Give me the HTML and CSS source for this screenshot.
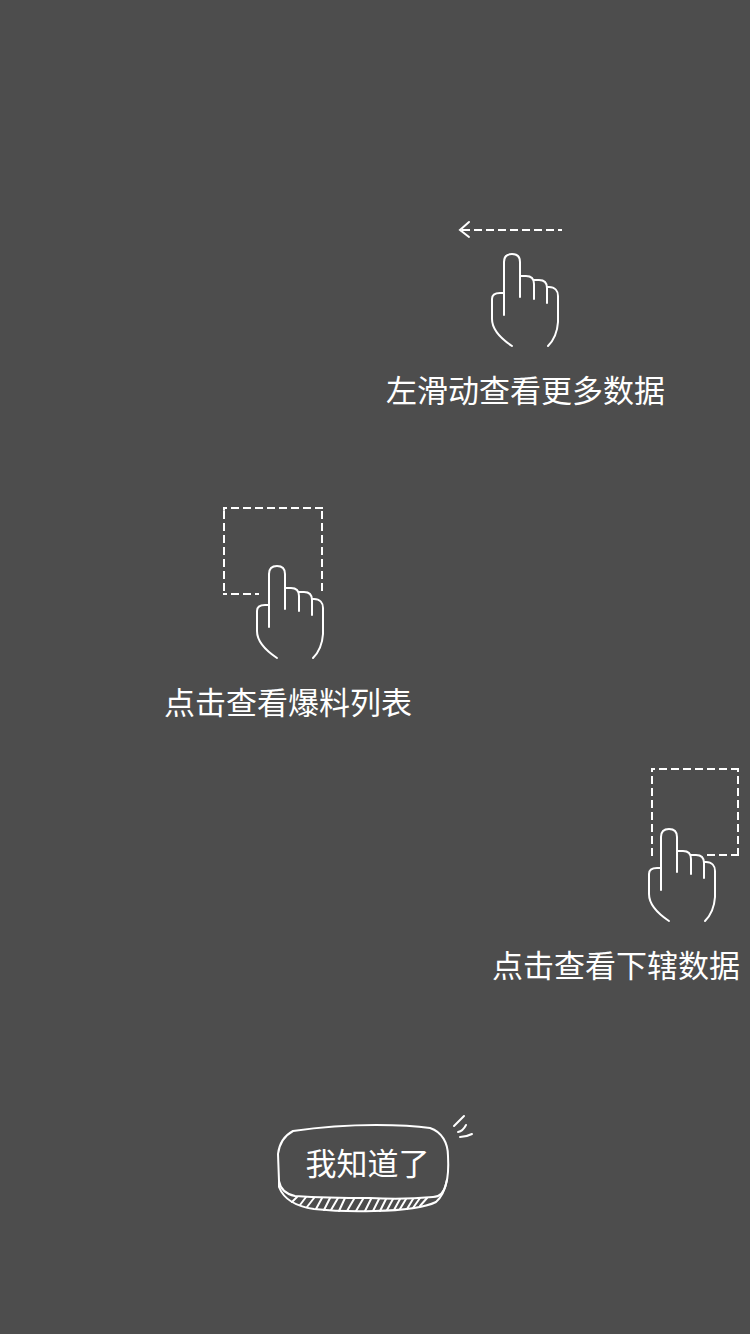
FILE: index.html
```html
<!DOCTYPE html>
<html lang="zh-CN">
<head>
<meta charset="utf-8">
<meta name="viewport" content="width=device-width, initial-scale=1">
<title>操作引导</title>
<link rel="stylesheet" href="styles.css">
</head>
<body>
<svg class="symbols" aria-hidden="true">
  <symbol id="hand" viewBox="0 0 70 96">
    <path d="M14 63V10C14 5 17 2 22 2S30 5 30 10V45M30 24H36C41 24 44 27 44 32V47M44 28H49C54 28 57 31 57 36V51M57 35H59C65 35 68 39 68 44V70Q67 85 58 94M14 41H10C5 41 2 43 2 47V67C2 77 10 86 22 94"/>
  </symbol>
</svg>
<main class="guide">
  <figure class="step step-swipe">
    <svg class="art art-swipe" width="108" height="128" viewBox="0 0 108 128" aria-hidden="true">
      <path d="M12 2L3 10L12 17"/>
      <path class="dash" d="M5 10H105"/>
      <use href="#hand" x="33" y="32" width="70" height="96"/>
    </svg>
    <figcaption class="caption">左滑动查看更多数据</figcaption>
  </figure>
  <figure class="step step-list">
    <svg class="art art-list" width="103" height="154" viewBox="0 0 103 154" aria-hidden="true">
      <path class="dash shift-top" d="M1 2H101"/>
      <path class="dash shift-side" d="M2 2V89M100 2V86"/>
      <path class="dash shift-top" d="M1 88H37"/>
      <path d="M2 2V4"/>
      <use href="#hand" x="33" y="58" width="70" height="96"/>
    </svg>
    <figcaption class="caption">点击查看爆料列表</figcaption>
  </figure>
  <figure class="step step-area">
    <svg class="art art-area" width="93" height="156" viewBox="0 0 93 156" aria-hidden="true">
      <path class="dash shift-top" d="M4 2H92"/>
      <path class="dash shift-area" d="M5 2V89M91 2V89"/>
      <path class="dash" d="M60 88H92"/>
      <use href="#hand" x="0" y="60" width="70" height="96"/>
    </svg>
    <figcaption class="caption">点击查看下辖数据</figcaption>
  </figure>
  <button class="confirm" type="button">
    <svg class="confirm-frame" width="198" height="100" viewBox="0 0 198 100" aria-hidden="true">
      <path d="M17 17Q58 11 100 11Q134 11 154 14C166 18 172 29 172 42Q173 60 170 70Q167 83 157 83Q126 86 94 84Q50 84 19 82Q5 79 3 67L2 40Q4 24 17 17Z"/>
      <path d="M3 67V73Q10 91 38 95Q66 98 98 97Q144 96 160 88Q168 81 171 66"/>
      <path class="hatch" d="M21 83L16 88M30 83L24 91M38 84L31 93M46 84L40 95M54 84L48 96M62 84L55 96M69 84L63 97M78 85L71 97M87 85L80 97M95 85L89 97M103 85L97 97M110 85L104 97M117 85L111 96M124 85L118 96M130 85L124 95M137 85L131 95M144 84L137 94M151 84L144 92"/>
      <path d="M188 2L178 12M190 11Q187 17 182 18M196 20Q190 23 184 23"/>
    </svg>
    <span class="confirm-label">我知道了</span>
  </button>
</main>
</body>
</html>
```
FILE: styles.css
```css
body {
  margin: 0;
  background: #4d4d4d;
  color: #fff;
  font-family: "Noto Sans CJK SC", sans-serif;
}

.symbols {
  position: absolute;
  width: 0;
  height: 0;
}

.guide {
  box-sizing: border-box;
  min-height: 100vh;
  padding: 220px 10px 40px;
  display: flex;
  flex-direction: column;
}

.step {
  margin: 0;
  display: flex;
  flex-direction: column;
  gap: 23px;
}

.step-swipe {
  align-self: flex-end;
  margin-right: 75px;
}

.step-list {
  align-self: flex-start;
  margin: 99px 0 0 154px;
}

.step-area {
  align-self: flex-end;
  margin-top: 48px;
}

.art,
.confirm-frame {
  display: block;
  fill: none;
  stroke: #fff;
  stroke-width: 2;
  stroke-linecap: round;
}

.art-swipe {
  margin-left: 71px;
}

.art-list {
  margin-left: 58px;
}

.art-area {
  align-self: flex-end;
}

.dash {
  stroke-dasharray: 8 4;
  stroke-linecap: butt;
}

.shift-top {
  stroke-dashoffset: 4;
}

.shift-side {
  stroke-dashoffset: 9;
}

.shift-area {
  stroke-dashoffset: 5;
}

.caption,
.confirm-label {
  font-size: 31px;
  line-height: 36px;
  white-space: nowrap;
}

.confirm {
  align-self: center;
  margin-top: 132px;
  padding: 0;
  border: 0;
  background: none;
  color: inherit;
  font-family: inherit;
  display: grid;
  cursor: pointer;
}

.confirm-frame,
.confirm-label {
  grid-area: 1 / 1;
}

.confirm-label {
  place-self: center;
  padding: 0 15px 4px 0;
}
```
